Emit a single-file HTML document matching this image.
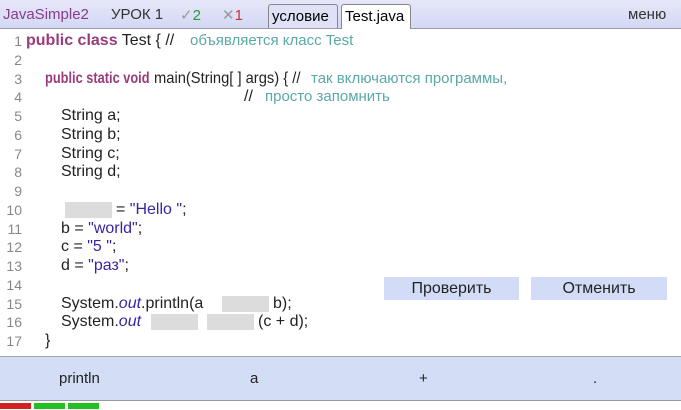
<!DOCTYPE html>
<html><head><meta charset="utf-8"><style>
body{margin:0;width:681px;height:409px;overflow:hidden;background:#fff;font-family:"Liberation Sans",sans-serif;position:relative}
.hdr{position:absolute;left:0;top:0;width:681px;height:28px;background:linear-gradient(#e6e7f8,#d3d8f4);border-bottom:1px solid #9a9aa8}
.h{position:absolute;top:6px;font-size:15px;color:#333}
.tab{position:absolute;top:4px;height:24px;border:1px solid #888;border-bottom:none;border-radius:3px 3px 0 0;font-size:15px;line-height:24px;padding:0 3px;box-sizing:border-box}
.n{position:absolute;width:22px;text-align:right;left:0;font-size:14px;color:#888;line-height:18px}
.c{position:absolute;font-size:16px;color:#222;line-height:18px;white-space:pre}
.k{color:#9a3b7c;font-weight:bold}
.s{color:#3b23a6}
.cm{position:absolute;font-size:15px;color:#5aa9a6;line-height:18px;white-space:pre}
.i{font-style:italic;color:#3b23a6}
.b{position:absolute;background:#dcdcdc;height:16px}
.btn{position:absolute;top:277px;height:23px;background:#d3dcf6;font-size:16px;line-height:23px;text-align:center;color:#222}
.bar{position:absolute;left:0;top:356px;width:681px;height:44px;background:#d3ddf6;border-top:1px solid #9aa}
.bt{position:absolute;top:370px;font-size:15px;color:#222}
</style></head><body>
<div class="hdr"></div>
<div class="h" style="left:3px;color:#8a3b8a">JavaSimple2</div>
<div class="h" style="left:111px">УРОК 1</div>
<div class="h" style="left:180px;color:#2a9a3a"><span style="color:#999">✓</span>2</div>
<div class="h" style="left:222px;color:#c33"><span style="color:#999">✕</span>1</div>
<div class="tab" style="left:268px;width:70px;background:#dfe2f6">условие</div>
<div class="tab" style="left:341px;width:70px;background:#fff;height:25px">Test.java</div>
<div class="h" style="left:628px">меню</div>

<div class="n" style="top:32px">1</div><div class="n" style="top:51px">2</div><div class="n" style="top:70px">3</div><div class="n" style="top:88px">4</div><div class="n" style="top:107px">5</div><div class="n" style="top:126px">6</div><div class="n" style="top:145px">7</div><div class="n" style="top:163px">8</div><div class="n" style="top:182px">9</div><div class="n" style="top:201px">10</div><div class="n" style="top:220px">11</div><div class="n" style="top:238px">12</div><div class="n" style="top:257px">13</div><div class="n" style="top:276px">14</div><div class="n" style="top:295px">15</div><div class="n" style="top:313px">16</div><div class="n" style="top:332px">17</div>

<div class="c" style="top:32px;left:26px"><span class="k">public class</span> Test { //</div>
<div class="cm" style="top:32px;left:190px">объявляется класс Test</div>
<div class="c k" style="top:70px;left:45px;transform:scaleX(0.8);transform-origin:left">public static void</div>
<div class="c" style="top:70px;left:154px;transform:scaleX(0.92);transform-origin:left">main(String[ ] args) { //</div>
<div class="cm" style="top:70px;left:311px">так включаются программы,</div>
<div class="c" style="top:88px;left:244px">//</div>
<div class="cm" style="top:88px;left:265px">просто запомнить</div>
<div class="c" style="top:107px;left:61px">String a;</div>
<div class="c" style="top:126px;left:61px">String b;</div>
<div class="c" style="top:145px;left:61px">String c;</div>
<div class="c" style="top:163px;left:61px">String d;</div>
<div class="b" style="top:202px;left:65px;width:47px"></div>
<div class="c" style="top:201px;left:116px">= <span class="s">"Hello "</span>;</div>
<div class="c" style="top:220px;left:61px">b = <span class="s">"world"</span>;</div>
<div class="c" style="top:238px;left:61px">c = <span class="s">"5 "</span>;</div>
<div class="c" style="top:257px;left:61px">d = <span class="s">"раз"</span>;</div>
<div class="c" style="top:295px;left:61px">System.<span class="i">out</span>.println(a</div>
<div class="b" style="top:296px;left:222px;width:47px"></div>
<div class="c" style="top:295px;left:273px">b);</div>
<div class="c" style="top:313px;left:61px">System.<span class="i">out</span></div>
<div class="b" style="top:314px;left:151px;width:47px"></div>
<div class="b" style="top:314px;left:207px;width:47px"></div>
<div class="c" style="top:313px;left:258px">(c + d);</div>
<div class="c" style="top:332px;left:45px">}</div>

<div class="btn" style="left:384px;width:135px">Проверить</div>
<div class="btn" style="left:531px;width:136px">Отменить</div>

<div class="bar"></div>
<div class="bt" style="left:59px">println</div>
<div class="bt" style="left:250px">a</div>
<div class="bt" style="left:419px">+</div>
<div class="bt" style="left:593px">.</div>
<div style="position:absolute;left:0;top:400px;width:681px;height:9px;background:#fff;border-top:1px solid #999"></div>
<div style="position:absolute;left:0;top:403px;width:31px;height:6px;background:#d32020"></div>
<div style="position:absolute;left:34px;top:403px;width:31px;height:6px;background:#22c022"></div>
<div style="position:absolute;left:68px;top:403px;width:31px;height:6px;background:#22c022"></div>
</body></html>
